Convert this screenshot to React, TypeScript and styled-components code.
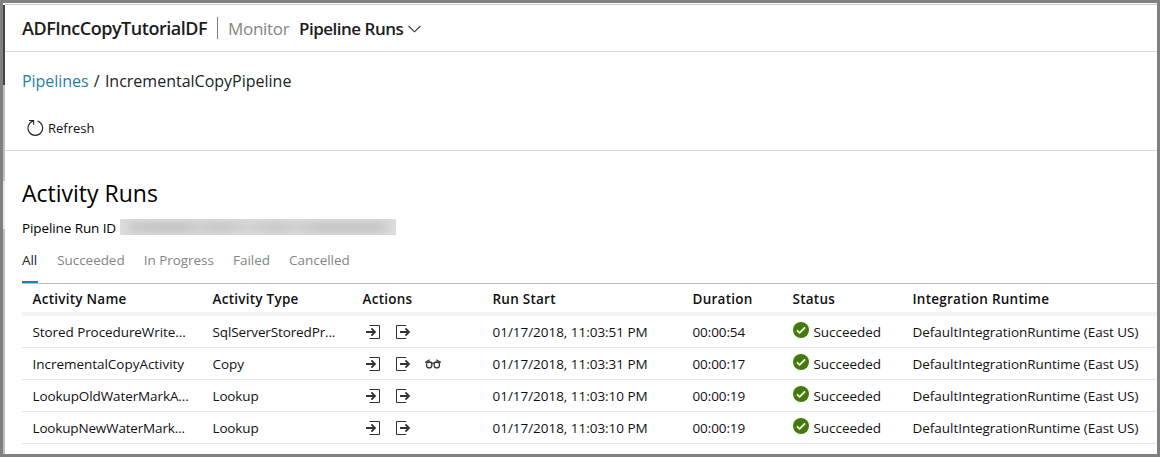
import React from 'react';
import styled, { createGlobalStyle } from 'styled-components';

const GlobalStyle = createGlobalStyle`
  *, *::before, *::after { box-sizing: border-box; }
  body { margin: 0; background: #fff; }
`;

const Frame = styled.div`
  display: flex;
  width: 1160px;
  height: 457px;
  border: 3px solid #808080;
  background: #fff;
  overflow: hidden;
  font-family: 'Open Sans', 'Noto Sans', sans-serif;
  font-size: 13.5px;
  color: #111;
`;

const SideRail = styled.div`
  flex: none;
  width: 2px;
  margin-top: 2px;
  background: linear-gradient(
    #444 0 80px,
    #c0c0c0 80px 176px,
    #e9e9e9 176px 224px,
    #c0c0c0 224px
  );
`;

const Main = styled.main`
  flex: 1;
  min-width: 0;
  padding-top: 1px;
`;

const Header = styled.header`
  display: flex;
  align-items: center;
  height: 48px;
  padding-left: 17px;
  border-top: 1px solid #ccc;
  border-bottom: 1px solid #d8d8d8;
`;

const FactoryName = styled.span`
  width: 195px;
  font-size: 18px;
  font-weight: 600;
  letter-spacing: -0.47px;
  color: #1c1c1c;
`;

const Divider = styled.span`
  width: 1px;
  height: 22px;
  background: #808080;
`;

const Section = styled.span`
  width: 81px;
  padding-left: 10px;
  font-size: 17px;
  letter-spacing: -0.3px;
  color: #858585;
`;

const PageName = styled.span`
  display: flex;
  align-items: center;
  gap: 5px;
  font-size: 17px;
  font-weight: 600;
  letter-spacing: -0.5px;
  color: #1c1c1c;

  svg { margin-top: 2px; }
`;

const Breadcrumb = styled.nav`
  height: 58px;
  padding-left: 17px;
  font-size: 16px;
  line-height: 58px;
  color: #222;
  white-space: pre;
  word-spacing: 1.1px;
`;

const CrumbLink = styled.a`
  letter-spacing: -0.05px;
  color: #1f7fa6;
`;

const Toolbar = styled.div`
  height: 41px;
  padding-left: 22px;
  border-bottom: 1px solid #d8d8d8;
`;

const RefreshButton = styled.button`
  display: flex;
  align-items: center;
  gap: 4px;
  height: 36px;
  padding: 0;
  border: 0;
  background: none;
  font: 13px 'Open Sans', 'Noto Sans', sans-serif;
  color: #111;
`;

const Content = styled.section`
  padding: 26px 0 0 17px;
`;

const Title = styled.h1`
  margin: 0 0 10px;
  font-size: 23px;
  font-weight: 400;
  line-height: 32px;
  color: #000;
`;

const RunId = styled.div`
  display: flex;
  height: 25px;
  line-height: 18px;
  letter-spacing: -0.1px;
  color: #000;
`;

const RunIdLabel = styled.span`
  width: 98px;
`;

const Redacted = styled.span`
  width: 276px;
  height: 16px;
  background: linear-gradient(
    90deg,
    #dedede 0,
    #c9c9c9 6%,
    #c6c6c6 22%,
    #cfcfcf 29%,
    #c8c8c8 36%,
    #d3d3d3 46%,
    #cacaca 56%,
    #d2d2d2 64%,
    #c8c8c8 73%,
    #c8c8c8 93%,
    #dddddd 100%
  );
  box-shadow: inset 0 0 6px 2px #dcdcdc;
`;

const Tabs = styled.div`
  display: flex;
  gap: 19.2px;
  height: 40px;
  border-bottom: 1px solid #bdbdbd;
`;

const Tab = styled.span<{ $active?: boolean }>`
  min-width: 16px;
  height: 39px;
  line-height: 32px;
  letter-spacing: -0.05px;
  color: ${(p) => (p.$active ? '#222' : '#858585')};
  border-bottom: ${(p) => (p.$active ? '2px solid #1f7fa6' : '0')};
`;

const Row = styled.div`
  display: grid;
  grid-template-columns: 180px 150px 130px 200px 100px 120px 1fr;
  align-items: center;
  height: 32px;
  padding-left: 10.5px;
  border-bottom: 1px solid #e6e6e6;
  white-space: nowrap;
`;

const HeadRow = styled(Row)`
  padding-top: 1px;
  border-bottom: 4px solid #f3f3f3;
  font-weight: 600;
  letter-spacing: 0.25px;
`;

const Cell = styled.span<{ $spacing?: number }>`
  letter-spacing: ${(p) => p.$spacing ?? -0.03}px;
`;

const Actions = styled.span`
  display: flex;
  align-items: center;
  gap: 16px;
  padding-left: 3.5px;

  svg:nth-child(3) { margin-left: -1px; }
`;

const Status = styled.span`
  display: flex;
  align-items: center;
  gap: 4.5px;
  padding-left: .5px;
  letter-spacing: -0.05px;

  svg { margin-bottom: 3px; }
`;

const ChevronIcon = () => (
  <svg width="13" height="8" viewBox="0 0 13 8" fill="none" stroke="#333" strokeWidth="1.1">
    <path d="M.6 1l5.900 5.800L12.400 1" />
  </svg>
);

const RefreshIcon = () => (
  <svg width="17" height="18" viewBox="0 0 17 18" fill="none" stroke="#222" strokeWidth="1.1">
    <path d="M10.600 2.100A7.300 7.300 0 1 1 6 2.100" />
    <path d="M2 1.500h4.600v4.200" />
  </svg>
);

const InputIcon = () => (
  <svg width="14" height="14" viewBox="0 0 14 14" fill="none" stroke="#333">
    <path d="M3.500 .5h10v13h-10" />
    <path d="M0 7h9M5.400 3.400L9 7l-3.600 3.600" strokeWidth="1.800" />
  </svg>
);

const OutputIcon = () => (
  <svg width="14" height="14" viewBox="0 0 14 14" fill="none" stroke="#333">
    <path d="M10.300 .5H.5v13h9.800" />
    <path d="M4 7h9M9.400 3.400L13 7l-3.600 3.600" strokeWidth="1.800" />
  </svg>
);

const GlassesIcon = () => (
  <svg width="16" height="10" viewBox="0 0 16 10" fill="none" stroke="#333" strokeWidth="1.2">
    <path d="M0 3.200h2M14 3.200h2M1.200 2.800L4.800.8M14.800 2.800L11.200.8" />
    <ellipse cx="4.200" cy="5.900" rx="2.700" ry="3" />
    <ellipse cx="11.800" cy="5.900" rx="2.700" ry="3" />
    <path d="M2 3.300h4.400L8 4.600l1.600-1.300H14" />
  </svg>
);

const SuccessIcon = () => (
  <svg width="16" height="16" viewBox="0 0 16 16">
    <circle cx="8" cy="8" r="8" fill="#427a0b" />
    <path d="M3.900 8.300l2.700 2.600 5.500-5.600" fill="none" stroke="#fff" strokeWidth="1.700" />
  </svg>
);

type Run = {
  name: string;
  nameSpacing?: number;
  type: string;
  typeSpacing?: number;
  details?: boolean;
  start: string;
  duration: string;
};

const runs: Run[] = [
  { name: 'Stored ProcedureWrite...', nameSpacing: -0.08, type: 'SqlServerStoredPr...', typeSpacing: -0.13, start: '01/17/2018, 11:03:51 PM', duration: '00:00:54' },
  { name: 'IncrementalCopyActivity', type: 'Copy', details: true, start: '01/17/2018, 11:03:31 PM', duration: '00:00:17' },
  { name: 'LookupOldWaterMarkA...', nameSpacing: -0.1, type: 'Lookup', typeSpacing: -0.15, start: '01/17/2018, 11:03:10 PM', duration: '00:00:19' },
  { name: 'LookupNewWaterMark...', nameSpacing: -0.17, type: 'Lookup', typeSpacing: -0.15, start: '01/17/2018, 11:03:10 PM', duration: '00:00:19' },
];

const columns = ['Activity Name', 'Activity Type', 'Actions', 'Run Start', 'Duration', 'Status', 'Integration Runtime'];
const filters = ['All', 'Succeeded', 'In Progress', 'Failed', 'Cancelled'];

export default function App() {
  return (
    <>
      <GlobalStyle />
      <Frame>
        <SideRail />
        <Main>
          <Header>
            <FactoryName>ADFIncCopyTutorialDF</FactoryName>
            <Divider />
            <Section>Monitor</Section>
            <PageName>
              Pipeline Runs
              <ChevronIcon />
            </PageName>
          </Header>
          <Breadcrumb>
            <CrumbLink>Pipelines</CrumbLink> / IncrementalCopyPipeline
          </Breadcrumb>
          <Toolbar>
            <RefreshButton>
              <RefreshIcon />
              Refresh
            </RefreshButton>
          </Toolbar>
          <Content>
            <Title>Activity Runs</Title>
            <RunId>
              <RunIdLabel>Pipeline Run ID</RunIdLabel>
              <Redacted />
            </RunId>
            <Tabs>
              {filters.map((label, i) => (
                <Tab key={label} $active={i === 0}>{label}</Tab>
              ))}
            </Tabs>
            <HeadRow>
              {columns.map((label) => (
                <span key={label}>{label}</span>
              ))}
            </HeadRow>
            {runs.map((run) => (
              <Row key={run.name}>
                <Cell $spacing={run.nameSpacing}>{run.name}</Cell>
                <Cell $spacing={run.typeSpacing}>{run.type}</Cell>
                <Actions>
                  <InputIcon />
                  <OutputIcon />
                  {run.details && <GlassesIcon />}
                </Actions>
                <Cell>{run.start}</Cell>
                <Cell $spacing={-0.1}>{run.duration}</Cell>
                <Status>
                  <SuccessIcon />
                  Succeeded
                </Status>
                <Cell>DefaultIntegrationRuntime (East US)</Cell>
              </Row>
            ))}
          </Content>
        </Main>
      </Frame>
    </>
  );
}
